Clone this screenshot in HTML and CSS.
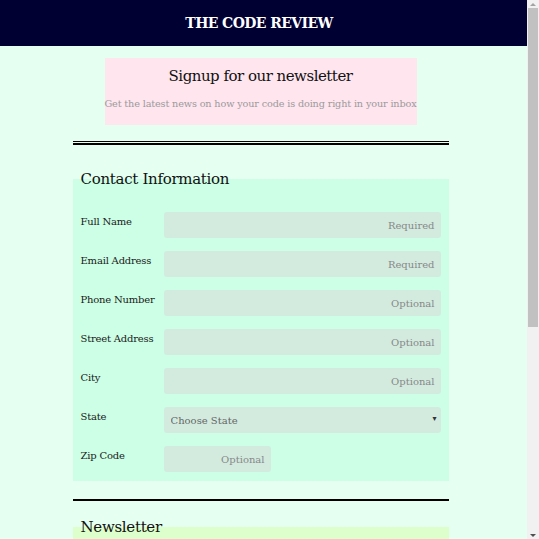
FILE: index.html
```html
<!DOCTYPE html>
<html lang="en">
<head>
<meta charset="utf-8">
<title>The Code Review</title>
<link rel="stylesheet" href="styles.css">
</head>
<body>
<div class="page">
<header class="site-header">
  <h1 class="site-title">THE CODE REVIEW</h1>
</header>
<main class="main">
<div class="container">
  <section class="signup">
    <h2 class="signup-title">Signup for our newsletter</h2>
    <p class="signup-text">Get the latest news on how your code is doing right in your inbox</p>
  </section>
  <hr class="double-rule">
  <form class="signup-form">
    <fieldset class="group group-contact">
      <legend class="group-title">Contact Information</legend>
      <div class="row">
        <label class="row-label" for="name">Full Name</label>
        <input class="field" id="name" type="text" placeholder="Required">
      </div>
      <div class="row">
        <label class="row-label" for="email">Email Address</label>
        <input class="field" id="email" type="email" placeholder="Required">
      </div>
      <div class="row">
        <label class="row-label" for="phone">Phone Number</label>
        <input class="field" id="phone" type="tel" placeholder="Optional">
      </div>
      <div class="row">
        <label class="row-label" for="street">Street Address</label>
        <input class="field" id="street" type="text" placeholder="Optional">
      </div>
      <div class="row">
        <label class="row-label" for="city">City</label>
        <input class="field" id="city" type="text" placeholder="Optional">
      </div>
      <div class="row">
        <label class="row-label" for="state">State</label>
        <div class="select-wrap">
          <select class="field field-select" id="state">
            <option>Choose State</option>
            <option>Alabama</option>
            <option>Alaska</option>
          </select>
          <span class="select-arrow">&#9662;</span>
        </div>
      </div>
      <div class="row">
        <label class="row-label" for="zip">Zip Code</label>
        <input class="field field-zip" id="zip" type="text" placeholder="Optional">
      </div>
    </fieldset>
    <hr class="rule">
    <fieldset class="group group-news">
      <legend class="group-title">Newsletter</legend>
      <p class="news-q">Select the newsletters you would like to receive</p>
      <label class="check"><input type="checkbox"> HTML News</label>
      <label class="check"><input type="checkbox"> CSS News</label>
      <label class="check"><input type="checkbox"> Javascript News</label>
      <p class="news-q">Newsletter format</p>
      <label class="check"><input type="radio" name="fmt"> HTML</label>
      <label class="check"><input type="radio" name="fmt"> Plain text</label>
    </fieldset>
    <hr class="rule">
    <div class="actions">
      <button class="submit" type="submit">Sign Up</button>
    </div>
  </form>
</div>
</main>
</div>
<div class="scrollbar" aria-hidden="true">
  <div class="sb-button"><span class="sb-arrow-up"></span></div>
  <div class="sb-track"><div class="sb-thumb"></div></div>
  <div class="sb-button"><span class="sb-arrow-down"></span></div>
</div>
</body>
</html>
```

FILE: styles.css
```css
html, body {
  margin: 0;
  padding: 0;
  height: 100%;
  overflow: hidden;
}
body {
  display: flex;
  background: #e5fff0;
  font-family: "DejaVu Serif", "Liberation Serif", serif;
  color: #111;
}
.page {
  flex: 1;
  min-width: 0;
  height: 100vh;
  overflow: hidden;
}
.scrollbar {
  width: 12px;
  flex: none;
  height: 100vh;
  background: #f1f1f1;
  display: flex;
  flex-direction: column;
}
.sb-button {
  height: 8px;
  flex: none;
  display: flex;
  align-items: center;
  justify-content: center;
}
.sb-arrow-up {
  width: 0;
  height: 0;
  border-left: 3px solid transparent;
  border-right: 3px solid transparent;
  border-bottom: 3px solid #a3a3a3;
}
.sb-arrow-down {
  width: 0;
  height: 0;
  border-left: 3px solid transparent;
  border-right: 3px solid transparent;
  border-top: 3px solid #505050;
}
.sb-track {
  flex: 1;
  padding: 0 1px;
}
.sb-thumb {
  height: 319px;
  background: #c1c1c1;
}
.site-header {
  background: #000033;
  height: 46px;
  display: flex;
  align-items: center;
  justify-content: center;
  padding-right: 9px;
}
.site-title {
  margin: 0;
  color: #fff;
  font-size: 14px;
  font-weight: bold;
  letter-spacing: -0.6px;
}
.main {
  display: block;
  padding-right: 6px;
}
.container {
  width: 376px;
  margin: 0 auto;
  padding-top: 12px;
  padding-bottom: 24px;
}
.signup {
  width: 312px;
  margin: 0 auto;
  background: #ffe5ee;
  text-align: center;
  padding: 7px 0 0;
  box-sizing: border-box;
  height: 67px;
}
.signup-title {
  margin: 0;
  font-size: 15px;
  font-weight: normal;
  line-height: 22px;
  letter-spacing: -0.5px;
}
.signup-text {
  margin: 11px 0 0;
  font-size: 9.7px;
  color: #9a9a9a;
  white-space: nowrap;
  letter-spacing: -0.15px;
}
.double-rule {
  margin: 16px 0 0;
  border: 0;
  border-top: 1px solid #000;
  border-bottom: 2px solid #000;
  height: 1px;
  background: transparent;
}
.signup-form {
  margin-top: 25px;
}
.group {
  margin: 0;
  border: 0;
  padding: 0 8px 9px;
  min-width: 0;
}
.group-contact {
  background: #ccffe5;
}
.group-news {
  background: #ddffcc;
  padding-bottom: 14px;
}
.group-title {
  padding: 0;
  font-size: 15px;
  line-height: 18px;
  letter-spacing: -0.3px;
}
.row {
  display: grid;
  grid-template-columns: 83px 1fr;
  align-items: start;
  margin-top: 13px;
}
.row:first-of-type {
  margin-top: 24px;
}
.row-label {
  font-size: 10px;
  line-height: 18px;
  padding-top: 1px;
  color: #1a1a1a;
  letter-spacing: -0.2px;
}
.field {
  display: block;
  box-sizing: border-box;
  width: 100%;
  height: 26px;
  border: 0;
  border-radius: 3px;
  background: #d3ebdf;
  padding: 0 6px;
  font-family: inherit;
  font-size: 10px;
  text-align: right;
  color: #333;
}
.field::placeholder {
  color: #888;
}
.field-zip {
  width: 107px;
}
.select-wrap {
  position: relative;
}
.field-select {
  appearance: none;
  -webkit-appearance: none;
  text-align: left;
  padding-left: 7px;
  color: #666;
}
.select-arrow {
  position: absolute;
  right: 4px;
  top: 7px;
  font-size: 8px;
  color: #333;
  pointer-events: none;
}
.rule {
  margin: 18px 0 17px;
  border: 0;
  border-top: 2px solid #000;
  height: 0;
}
.news-q {
  margin: 18px 0 6px;
  font-size: 10px;
}
.check {
  display: block;
  font-size: 10px;
  line-height: 22px;
}
.actions {
  display: flex;
  justify-content: center;
}
.submit {
  font-family: inherit;
  font-size: 13px;
  padding: 8px 24px;
  border: 0;
  border-radius: 3px;
  background: #000033;
  color: #fff;
}
```
